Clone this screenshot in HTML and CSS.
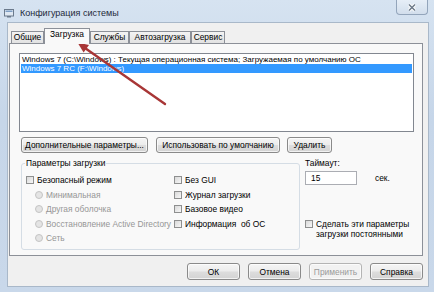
FILE: index.html
```html
<!DOCTYPE html>
<html lang="ru">
<head>
  <meta charset="UTF-8">
  <title>Конфигурация системы</title>
  <link rel="stylesheet" href="styles.css">
</head>
<body>
  <div class="window">
    <!-- Title bar -->
    <div class="titlebar">
      <svg class="appicon" width="10" height="9" viewBox="0 0 10 9">
        <rect x="0.5" y="0.5" width="9" height="6.5" fill="#dfe8f2" stroke="#6b7a8c"/>
        <rect x="1.5" y="1.5" width="7" height="1.5" fill="#7d9dc4"/>
        <rect x="3" y="7" width="4" height="1.5" fill="#6b7a8c"/>
      </svg>
      <span class="title">Конфигурация системы</span>
      <div class="closeBtn">
        <svg width="10" height="9" viewBox="0 0 10 9">
          <path d="M2 1.5 L8 7.5 M8 1.5 L2 7.5" stroke="#ffffff" stroke-width="3.2"/>
          <path d="M2 1.5 L8 7.5 M8 1.5 L2 7.5" stroke="#6d7a8a" stroke-width="1.5"/>
        </svg>
      </div>
    </div>

    <div class="client">
      <!-- Tabs -->
      <div class="tabs">
        <div class="tab w1">Общие</div>
        <div class="tab active">Загрузка</div>
        <div class="tab w3">Службы</div>
        <div class="tab w4">Автозагрузка</div>
        <div class="tab w5">Сервис</div>
      </div>

      <div class="panel">
        <div class="listbox">
          <div class="item">Windows 7 (C:\Windows) : Текущая операционная система; Загружаемая по умолчанию ОС</div>
          <div class="item selected">Windows 7 RC (F:\Windows)</div>
        </div>

        <div class="actions">
          <button class="btn advBtn">Дополнительные параметры...</button>
          <button class="btn defBtn">Использовать по умолчанию</button>
          <button class="btn delBtn">Удалить</button>
        </div>

        <div class="options">
          <fieldset class="group">
            <legend>Параметры загрузки</legend>
            <div class="optGrid">
              <div class="col">
                <div class="row"><span class="box"></span>Безопасный режим</div>
                <div class="row radio disabled"><span class="dot"></span>Минимальная</div>
                <div class="row radio disabled"><span class="dot"></span>Другая оболочка</div>
                <div class="row radio disabled"><span class="dot"></span>Восстановление Active Directory</div>
                <div class="row radio disabled"><span class="dot"></span>Сеть</div>
              </div>
              <div class="col">
                <div class="row"><span class="box"></span>Без GUI</div>
                <div class="row"><span class="box"></span>Журнал загрузки</div>
                <div class="row"><span class="box"></span>Базовое видео</div>
                <div class="row"><span class="box"></span>Информация&nbsp; об ОС</div>
              </div>
            </div>
          </fieldset>

          <div class="side">
            <div class="timeoutLabel">Таймаут:</div>
            <div class="timeoutRow">
              <span class="input">15</span>
              <span class="unit">сек.</span>
            </div>
            <div class="persist">
              <span class="box"></span>
              <span>Сделать эти параметры<br>загрузки постоянными</span>
            </div>
          </div>
        </div>
      </div>

      <div class="footer">
        <button class="btn dlgBtn">ОК</button>
        <button class="btn dlgBtn">Отмена</button>
        <button class="btn dlgBtn" disabled>Применить</button>
        <button class="btn dlgBtn">Справка</button>
      </div>
    </div>

    <!-- red annotation arrow -->
    <svg class="arrow" width="434" height="292" viewBox="0 0 434 292">
      <line x1="86" y1="48.7" x2="165" y2="104" stroke="#a83636" stroke-width="2.4" stroke-linecap="round"/>
      <polygon points="77.5,42.5 83.6,52.6 89,45" fill="#a83636"/>
    </svg>
  </div>
</body>
</html>
```

FILE: styles.css
```css
body {
  margin: 0;
  font-family: "Liberation Sans", Arial, sans-serif;
  font-size: 8.4px;
  color: #000000;
  background: #ffffff;
}
/* Outer window frame */
.window {
  position: relative;
  width: 434px;
  height: 292px;
  overflow: hidden;
  background: linear-gradient(#d6e3f1, #c6d6e9 40%, #c9d8ea);
}
/* Title bar */
.titlebar {
  display: flex;
  align-items: center;
  height: 22px;
  padding-left: 4px;
}
.appicon {
  margin-top: 4px;
}
.title {
  margin-left: 6px;
  margin-top: 3px;
  font-size: 9px;
  color: #1e2a3a;
}
.closeBtn {
  align-self: flex-start;
  margin-left: auto;
  margin-right: 6px;
  width: 30px;
  height: 14px;
  display: flex;
  align-items: center;
  justify-content: center;
  border: 1px solid #93a5bb;
  border-top: none;
  border-radius: 0 0 4px 4px;
  background: linear-gradient(#e6eef7, #d2deec);
}
/* Client area */
.client {
  margin-left: 7px;
  width: 420px;
  height: 258px;
  border: 1px solid #a9b8c9;
  background: #f0f0f0;
  padding-top: 5px;
}
/* Tabs */
.tabs {
  display: flex;
  align-items: flex-end;
  height: 15px;
  padding-left: 3px;
}
.tab {
  box-sizing: border-box;
  height: 12px;
  line-height: 11px;
  text-align: center;
  border: 1px solid #8c9098;
  border-bottom: none;
  background: linear-gradient(#f3f3f3, #e2e2e2);
}
.w1 { width: 33px; }
.w3 { width: 39px; }
.w4 { width: 62px; }
.w5 { width: 34px; }
.tab.active {
  position: relative;
  z-index: 1;
  width: 46px;
  height: 16px;
  margin-bottom: -1px;
  line-height: 11px;
  background: #f9f9f9;
}
/* Tab panel */
.panel {
  box-sizing: border-box;
  margin-left: 1px;
  width: 414px;
  height: 213px;
  border: 1px solid #8c9098;
  background: #f9f9f9;
  padding: 9px 8px 0 9px;
}
.listbox {
  box-sizing: border-box;
  height: 79px;
  border: 1px solid #828790;
  background: #ffffff;
  padding: 1px;
}
.item {
  height: 9px;
  line-height: 9px;
  padding-left: 1px;
  white-space: nowrap;
  font-size: 8px;
}
.item.selected {
  background: #3399ff;
  color: #ffffff;
}
/* Buttons */
.btn {
  box-sizing: border-box;
  margin: 0;
  padding: 0;
  font-family: inherit;
  font-size: 8.4px;
  white-space: nowrap;
  color: #000000;
  border: 1px solid #8a8a8a;
  border-radius: 3px;
  background: linear-gradient(#f5f5f5, #ececec 48%, #dddddd 52%, #d3d3d3);
  box-shadow: inset 0 0 0 1px rgba(255, 255, 255, 0.7);
}
.btn:disabled {
  color: #9a9a9a;
  border-color: #b4b4b4;
  background: #f2f2f2;
}
.actions {
  display: flex;
  margin-top: 5px;
  padding-left: 2px;
  height: 16px;
}
.actions .btn {
  height: 16px;
}
.advBtn { width: 127px; }
.defBtn { width: 124px; margin-left: 8px; }
.delBtn { width: 45px; margin-left: 7px; }
/* Lower options area */
.options {
  display: flex;
  margin-top: 5px;
}
.group {
  box-sizing: border-box;
  margin: 0 0 0 2px;
  width: 279px;
  padding: 4px 3px 3px 3px;
  border: 1px solid #d5dde5;
  border-radius: 3px;
  min-width: 0;
}
.group legend {
  padding: 0 1px;
  line-height: 11px;
}
.optGrid {
  display: grid;
  grid-template-columns: 148px 1fr;
}
.col {
  padding-left: 1px;
}
.row {
  display: flex;
  align-items: center;
  height: 14.5px;
  white-space: nowrap;
}
.box {
  box-sizing: border-box;
  flex: none;
  width: 8px;
  height: 8px;
  margin-right: 3px;
  border: 1px solid #8e8f8f;
  background: linear-gradient(135deg, #d9d9d9, #f7f7f7);
}
.radio {
  padding-left: 9px;
}
.dot {
  box-sizing: border-box;
  flex: none;
  width: 8px;
  height: 8px;
  margin-right: 3px;
  border: 1px solid #c4c4c4;
  border-radius: 50%;
  background: #e4e4e4;
}
.disabled {
  color: #969696;
}
/* Right column with timeout */
.side {
  display: flex;
  flex-direction: column;
  margin-left: 5px;
}
.timeoutLabel {
  line-height: 10px;
}
.timeoutRow {
  display: flex;
  align-items: center;
  margin-top: 3px;
}
.input {
  box-sizing: border-box;
  width: 52px;
  height: 14px;
  line-height: 12px;
  padding-left: 5px;
  border: 1px solid #abadb3;
  background: #ffffff;
}
.unit {
  margin-left: 18px;
}
.persist {
  display: flex;
  align-items: flex-start;
  margin-top: 34px;
  line-height: 10px;
  white-space: nowrap;
}
.persist .box {
  margin-top: 1px;
}
/* Dialog buttons */
.footer {
  display: flex;
  justify-content: flex-end;
  gap: 8px;
  margin-top: 7px;
  padding-right: 5px;
}
.dlgBtn {
  width: 53px;
  height: 17px;
}
/* Annotation overlay */
.arrow {
  position: absolute;
  left: 0;
  top: 0;
  pointer-events: none;
}
```
